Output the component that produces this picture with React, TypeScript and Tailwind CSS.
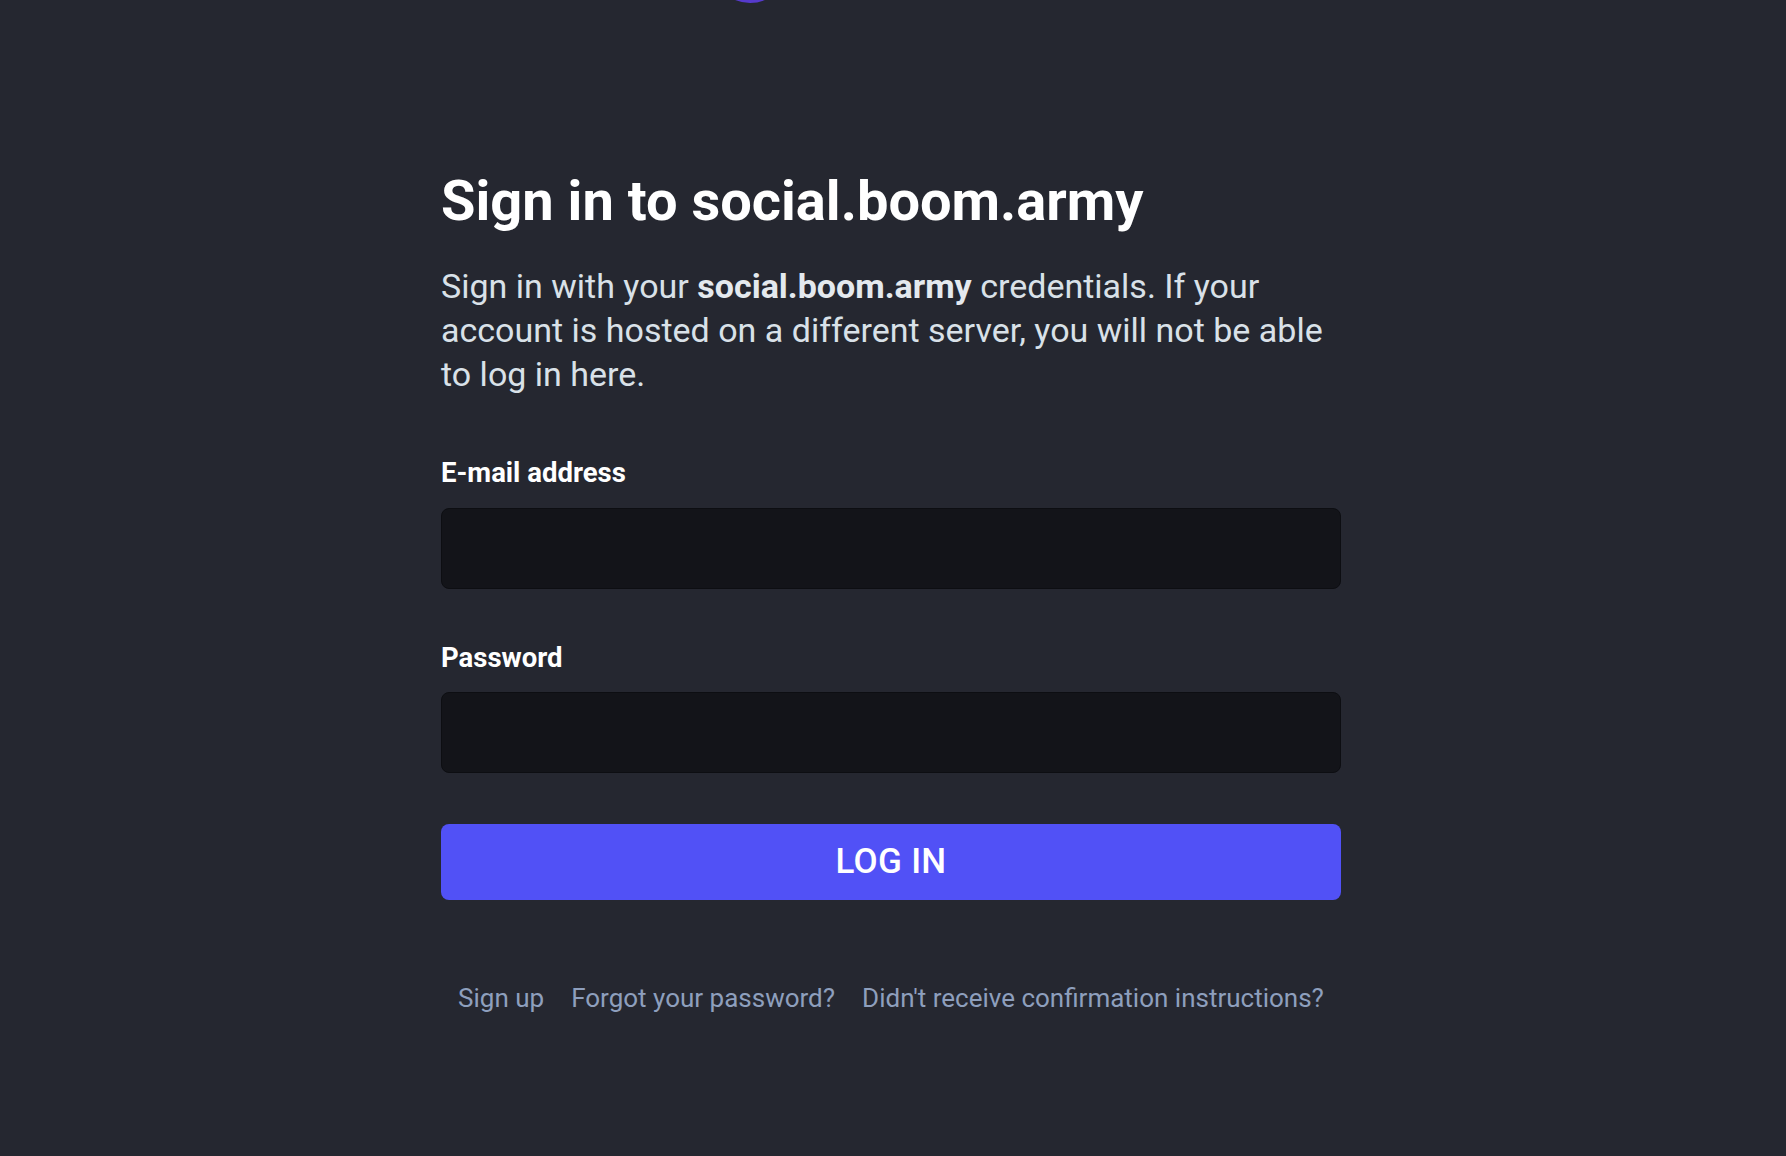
import React from "react";

export default function App() {
  return (
    <div
      className="min-h-[1156px] w-full bg-[#252730] overflow-hidden"
      style={{ fontFamily: "Roboto, 'Liberation Sans', sans-serif" }}
    >
      <div className="flex justify-center pr-[4px]">
        <div className="w-[900px] flex flex-col">
          {/* logo peeking at top */}
          <div className="flex justify-center">
            <div className="w-[78px] h-[78px] rounded-full bg-[#563acc] mt-[-75px] translate-x-[-141px]" />
          </div>

          <h1 className="mt-[166px] text-[56px] leading-[64px] font-bold text-white">
            Sign in to social.boom.army
          </h1>

          <p className="mt-[31px] w-full text-[34px] leading-[44px] text-[#d9e1e8]">
            Sign in with your <strong className="font-bold text-[#e4e9ee]">social.boom.army</strong> credentials. If your
            account is hosted on a different server, you will not be able to log in here.
          </p>

          <label className="mt-[61px] block text-[27.5px] leading-[32px] font-bold text-white">
            E-mail address
          </label>
          <input
            type="email"
            className="mt-[19px] h-[81px] w-full rounded-[8px] bg-[#131419] border border-[#0d0e12] outline-none px-4 text-white text-[26px]"
          />

          <label className="mt-[53px] block text-[27.5px] leading-[32px] font-bold text-white">
            Password
          </label>
          <input
            type="password"
            className="mt-[18px] h-[81px] w-full rounded-[8px] bg-[#131419] border border-[#0d0e12] outline-none px-4 text-white text-[26px]"
          />

          <button className="mt-[51px] h-[76px] w-full rounded-[8px] bg-[#5151f6] text-white text-[35px] font-medium tracking-[0.3px]">
            LOG IN
          </button>

          <div className="mt-[82px] flex justify-center gap-[27px] text-[26px] leading-[32px] text-[#8e9fbd]">
            <a href="#">Sign up</a>
            <a href="#">Forgot your password?</a>
            <a href="#">Didn't receive confirmation instructions?</a>
          </div>
        </div>
      </div>
    </div>
  );
}
